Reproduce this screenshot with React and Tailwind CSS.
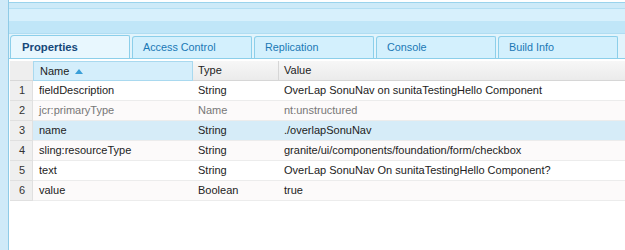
import React from "react";

const rows = [
  ["fieldDescription", "String", "OverLap SonuNav on sunitaTestingHello Component", false],
  ["jcr:primaryType", "Name", "nt:unstructured", true],
  ["name", "String", "./overlapSonuNav", false],
  ["sling:resourceType", "String", "granite/ui/components/foundation/form/checkbox", false],
  ["text", "String", "OverLap SonuNav On sunitaTestingHello Component?", false],
  ["value", "Boolean", "true", false],
];

const tabs = ["Properties", "Access Control", "Replication", "Console", "Build Info"];

export default function App() {
  return (
    <div
      className="w-[625px] h-[250px] overflow-hidden bg-[#cfeaf8] flex"
      style={{ fontFamily: '"Liberation Sans", Arial, sans-serif' }}
    >
      <div className="w-[8px] shrink-0 bg-[#cfeaf8]" />
      <div className="flex-1 flex flex-col border-l border-[#8fcbe6] min-w-0">
        <div className="h-[3px] bg-white border-b border-[#9ad3ec]" />
        <div className="h-[5px] bg-[#cdeaf8]" />
        <div className="h-[13px] bg-[#d7f0fc] border-t border-[#b4dff3]" />
        <div className="h-[13px] bg-[#c0e6f8] border-b border-[#b0ddf2]" />
        <div className="h-[25px] bg-[#e2f4fc] flex items-end gap-[2px] pl-[1px] border-b border-[#8ccfea]">
          {tabs.map((t, i) =>
            i === 0 ? (
              <div
                key={t}
                className="w-[120px] h-[23px] bg-[#e8f7fe] border border-b-0 border-[#8ccfea] rounded-tl-[4px] rounded-tr-[2px] flex items-center pl-[11px] text-[11.3px] font-bold text-[#15487a]"
              >
                {t}
              </div>
            ) : (
              <div
                key={t}
                className="w-[120px] h-[22px] bg-[#d3f0fd] border border-b-0 border-[#8ccfea] rounded-tl-[3px] rounded-tr-[2px] flex items-center pl-[10px] text-[10.8px] text-[#1a78b5]"
              >
                {t}
              </div>
            )
          )}
        </div>
        <div className="flex-1 bg-white pt-[2px] pl-[1px]">
          <div className="flex h-[20px] text-[11px] text-[#222]">
            <div className="w-[23px] bg-[#eeeeee] border-b border-[#d8d8d8]" />
            <div className="w-[160px] bg-[#d4eefb] border border-[#a9d9ef] flex items-center pl-[6px] gap-[6px]">
              <span>Name</span>
              <svg width="8" height="5" viewBox="0 0 8 5">
                <polygon points="0,5 4,0 8,5" fill="#3a9fd8" />
              </svg>
            </div>
            <div className="w-[86px] bg-gradient-to-b from-[#f7f7f7] to-[#ebebeb] border-b border-r border-[#d6d6d6] flex items-center pl-[5px]">
              Type
            </div>
            <div className="flex-1 bg-gradient-to-b from-[#f7f7f7] to-[#ebebeb] border-b border-[#d6d6d6] flex items-center pl-[5px]">
              Value
            </div>
          </div>
          {rows.map((r, i) => {
            const sel = i === 2;
            const bg = sel ? "bg-[#d6ecf8]" : i % 2 === 1 ? "bg-[#fcfafa]" : "bg-white";
            const col = r[3] ? "text-[#777]" : "text-[#222]";
            return (
              <div key={i} className={`flex h-[20px] text-[11px] ${col}`}>
                <div className="w-[23px] bg-[#efefef] border-b border-r border-[#e0e0e0] flex items-center justify-center text-[#333] pl-[2px]">
                  {i + 1}
                </div>
                <div className={`flex-1 flex border-b border-[#ececec] ${bg}`}>
                  <div className="w-[160px] flex items-center pl-[6px] whitespace-nowrap">{r[0]}</div>
                  <div className="w-[86px] flex items-center pl-[5px] whitespace-nowrap">{r[1]}</div>
                  <div className="flex-1 flex items-center pl-[5px] whitespace-nowrap">{r[2]}</div>
                </div>
              </div>
            );
          })}
        </div>
      </div>
    </div>
  );
}
